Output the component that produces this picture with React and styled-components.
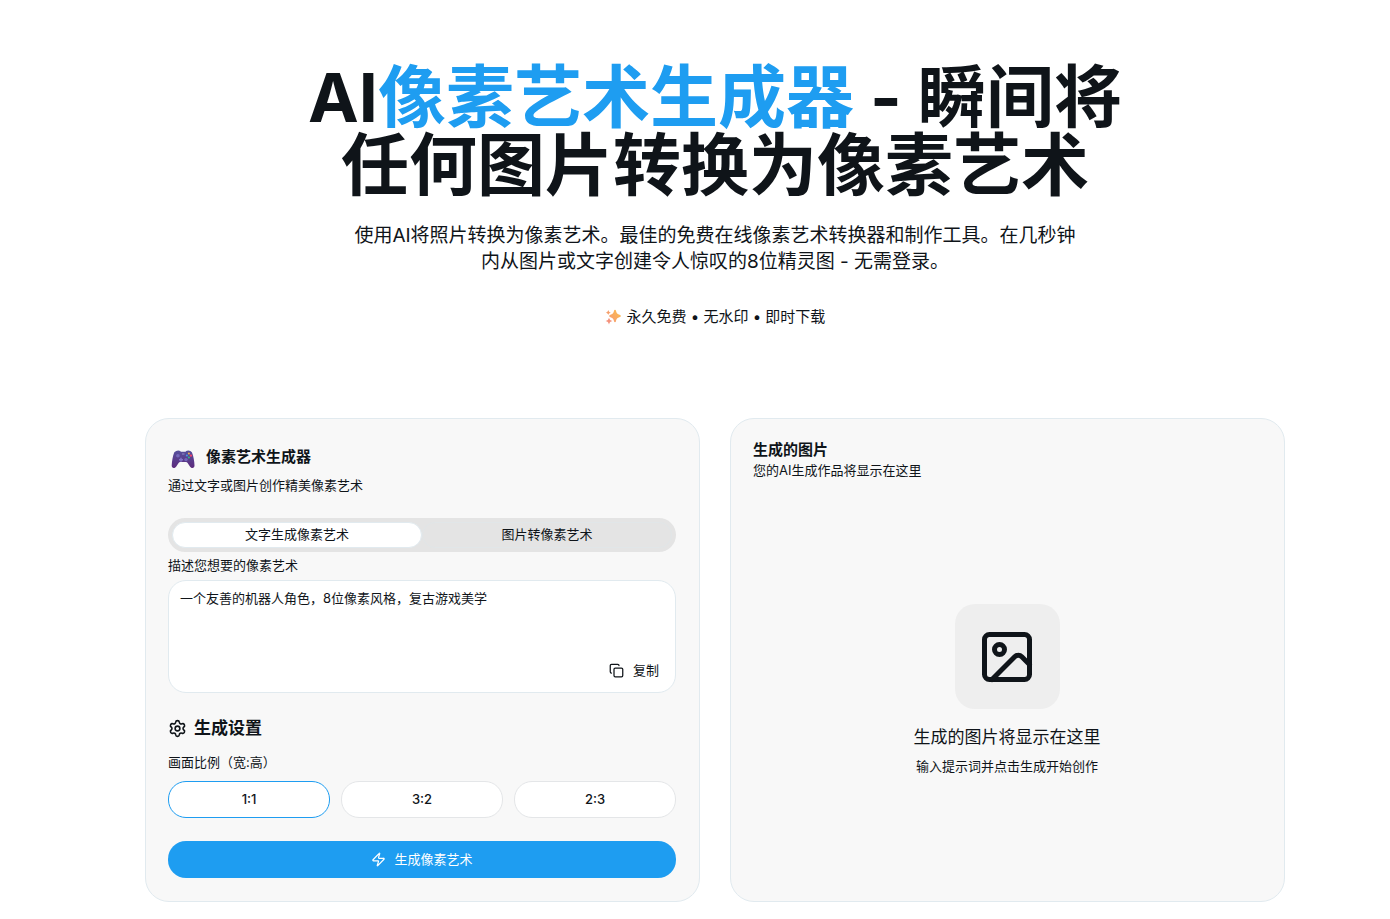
import React, { useState } from "react";
import styled, { createGlobalStyle, css } from "styled-components";
import { Copy, Settings, Zap, Image as ImageIcon } from "lucide-react";

const GlobalStyle = createGlobalStyle`
  *, *::before, *::after { box-sizing: border-box; }
  body {
    margin: 0;
    background: #ffffff;
    color: #0f1419;
    font-family: Inter, "Noto Sans CJK SC", sans-serif;
    font-size: 13px;
    line-height: 20px;
  }
  h1, h2, h3, p { margin: 0; }
  button, textarea { font: inherit; color: inherit; }
`;

const Page = styled.main`
  padding: 63px 105px 17px 145px;
`;

const Hero = styled.header`
  display: flex;
  flex-direction: column;
  align-items: center;
  text-align: center;
`;

const HeroTitle = styled.h1`
  max-width: 860px;
  font-size: 68px;
  line-height: 68px;
  font-weight: 700;
`;

const Phrase = styled.span`
  display: inline-block;
`;

const Accent = styled.span`
  color: #1e9df1;
`;

const Lead = styled.p`
  max-width: 730px;
  margin-top: 24px;
  font-size: 19px;
  line-height: 26px;
`;

const Perks = styled.p`
  display: flex;
  align-items: center;
  gap: 6px;
  margin-top: 31px;
  font-size: 15px;
  line-height: 22px;
`;

const Columns = styled.div`
  display: grid;
  grid-template-columns: 1fr 1fr;
  gap: 30px;
  margin-top: 90px;
`;

const Card = styled.section`
  display: flex;
  flex-direction: column;
  padding: 22px 23px 23px 22px;
  background: #f8f8f8;
  border: 1px solid #e1eaef;
  border-radius: 24px;
`;

const CardTitle = styled.h2`
  font-size: 15px;
  line-height: 18px;
  font-weight: 700;
`;

const CardNote = styled.p`
  margin-top: 1px;
`;

const TitleRow = styled.div`
  display: flex;
  align-items: center;
  gap: 8px;
  height: 32px;
  margin-bottom: 1px;
`;

const PadIcon = styled.svg`
  width: 30px;
  height: 30px;
  margin-top: 6px;
`;

const Tabs = styled.div`
  display: grid;
  grid-template-columns: 1fr 1fr;
  height: 34px;
  margin: 23px 0 3px;
  padding: 4px;
  background: #e4e4e4;
  border-radius: 17px;
`;

const Tab = styled.button`
  padding: 0 0 2px;
  border: 1px solid #e1e6e8;
  border-radius: 13px;
  background: transparent;
  line-height: 20px;
  ${(p) => p.$active && css`
    background: #ffffff;
    border-color: #e1eaef;
  `}
`;

const PromptBox = styled.div`
  position: relative;
  margin-top: 5px;
`;

const Prompt = styled.textarea`
  display: block;
  width: 100%;
  height: 113px;
  padding: 7px 11px;
  resize: none;
  outline: none;
  background: #ffffff;
  border: 1px solid #e1eaef;
  border-radius: 18px;
`;

const CopyButton = styled.button`
  position: absolute;
  right: 9px;
  bottom: 9px;
  display: flex;
  align-items: center;
  gap: 9px;
  padding: 4px 8px;
  border: 0;
  background: transparent;
`;

const SettingsTitle = styled.h3`
  display: flex;
  align-items: center;
  gap: 7px;
  margin: 23px 0 12px;
  font-size: 17px;
  line-height: 24px;
  font-weight: 700;
`;

const Ratios = styled.div`
  display: grid;
  grid-template-columns: repeat(3, 1fr);
  gap: 11px;
  margin: 9px 0 23px;
`;

const Ratio = styled.button`
  height: 37px;
  padding: 0 0 2px;
  font-weight: 500;
  background: #ffffff;
  border: 1px solid ${(p) => (p.$active ? "#1e9df1" : "#e4e6e8")};
  border-radius: 18px;
`;

const Generate = styled.button`
  display: flex;
  align-items: center;
  justify-content: center;
  gap: 8px;
  height: 37px;
  padding: 0 0 1px;
  color: #ffffff;
  background: #1e9df1;
  border: 0;
  border-radius: 18px;
`;

const Empty = styled.div`
  flex: 1;
  display: flex;
  flex-direction: column;
  align-items: center;
  justify-content: center;
  margin-top: 22px;
`;

const EmptyIcon = styled.div`
  display: flex;
  align-items: center;
  justify-content: center;
  width: 105px;
  height: 105px;
  margin-bottom: 15px;
  background: #eeeeee;
  border-radius: 20px;
`;

const EmptyTitle = styled.p`
  margin-bottom: 6px;
  font-size: 17px;
  line-height: 26px;
`;

function Sparkles() {
  return (
    <svg width="16" height="16" viewBox="0 0 16 16" aria-hidden="true">
      <defs>
        <linearGradient id="spark" x1="0" y1="1" x2="1" y2="0">
          <stop offset="0" stopColor="#f79a76" />
          <stop offset="1" stopColor="#fbc04c" />
        </linearGradient>
      </defs>
      <path fill="url(#spark)" d="M10 .8c.5 0 .8.4.9.8.6 2.700 1.300 3.600 4.200 4.400 1 .3 1 1.600 0 1.900-2.900.8-3.600 1.700-4.200 4.500-.2 1-1.600 1-1.800 0C8.500 9.600 7.700 8.700 4.900 7.900c-1-.3-1-1.600 0-1.900 2.800-.8 3.600-1.700 4.200-4.400.1-.4.400-.8.900-.8Z" />
      <path fill="#f6a06d" d="M3.300 1c.6 1.700.9 2 2.600 2.600-1.700.6-2 .9-2.600 2.500C2.700 4.500 2.400 4.200.8 3.600 2.400 3 2.700 2.700 3.300 1Z" />
      <path fill="#f4917b" d="M4 8.800c.8 2.200 1.200 2.600 3.400 3.300-2.200.7-2.600 1.100-3.400 3.300-.8-2.200-1.200-2.600-3.400-3.300C2.800 11.400 3.200 11 4 8.800Z" />
    </svg>
  );
}

function Gamepad() {
  return (
    <PadIcon viewBox="0 0 30 30" aria-hidden="true">
      <defs>
        <linearGradient id="pad" x1="0" y1="0" x2="0" y2="1">
          <stop offset="0" stopColor="#56509d" />
          <stop offset="1" stopColor="#5d2b7c" />
        </linearGradient>
      </defs>
      <path fill="url(#pad)" d="M8.200 6c.7-.7 3.200-.8 4 0l.6.700h4.800l.6-.7c.8-.8 3.400-.7 4.100 0 .5.500 1.400.8 1.800 1.700 1.300 3 2.300 8.600 2.400 12.900.1 2.700-2.700 3.400-4.400 1.100l-2.500-3.700c-.4-.6-.9-.9-1.700-.9h-5.600c-.8 0-1.300.3-1.700.9l-2.500 3.700c-1.700 2.300-4.500 1.600-4.400-1.100C3.900 16.300 4.800 10.700 6.100 7.700 6.600 6.800 7.700 6.500 8.200 6Z" />
      <circle cx="9.900" cy="10.700" r="1.800" fill="#7569bb" />
      <path d="M13 12.800v4M11 14.800h4" stroke="#8275c9" strokeWidth="1.500" />
      <circle cx="18" cy="14.600" r="1.700" fill="#7267b9" />
      <path d="M14 9h2.500" stroke="#8981c2" strokeWidth="1.200" />
      <circle cx="20.900" cy="8.600" r="1" fill="#efb34f" />
      <circle cx="18.900" cy="10.600" r="1" fill="#3d9be9" />
      <circle cx="22.900" cy="10.600" r="1.200" fill="#f0446c" />
      <circle cx="20.900" cy="12.600" r="1" fill="#32ba83" />
    </PadIcon>
  );
}

const MODES = ["文字生成像素艺术", "图片转像素艺术"];
const RATIOS = ["1:1", "3:2", "2:3"];

export default function App() {
  const [mode, setMode] = useState(0);
  const [ratio, setRatio] = useState("1:1");
  const [prompt, setPrompt] = useState("一个友善的机器人角色，8位像素风格，复古游戏美学");

  return (
    <>
      <GlobalStyle />
      <Page lang="zh-CN">
        <Hero>
          <HeroTitle>
            <Phrase>
              AI<Accent>像素艺术生成器</Accent> - 瞬间将
            </Phrase>
            <Phrase>任何图片转换为像素艺术</Phrase>
          </HeroTitle>
          <Lead>
            使用AI将照片转换为像素艺术。最佳的免费在线像素艺术转换器和制作工具。在几秒钟内从图片或文字创建令人惊叹的8位精灵图 - 无需登录。
          </Lead>
          <Perks>
            <Sparkles />
            <span>永久免费 • 无水印 • 即时下载</span>
          </Perks>
        </Hero>

        <Columns>
          <Card>
            <TitleRow>
              <Gamepad />
              <CardTitle>像素艺术生成器</CardTitle>
            </TitleRow>
            <CardNote>通过文字或图片创作精美像素艺术</CardNote>
            <Tabs role="tablist">
              {MODES.map((label, i) => (
                <Tab key={label} type="button" role="tab" aria-selected={mode === i} $active={mode === i} onClick={() => setMode(i)}>
                  {label}
                </Tab>
              ))}
            </Tabs>
            <label htmlFor="prompt">描述您想要的像素艺术</label>
            <PromptBox>
              <Prompt id="prompt" value={prompt} onChange={(e) => setPrompt(e.target.value)} />
              <CopyButton type="button" onClick={() => navigator.clipboard?.writeText(prompt)}>
                <Copy size={15} />
                复制
              </CopyButton>
            </PromptBox>
            <SettingsTitle>
              <Settings size={19} />
              生成设置
            </SettingsTitle>
            <p id="ratio-label">画面比例（宽:高）</p>
            <Ratios role="group" aria-labelledby="ratio-label">
              {RATIOS.map((r) => (
                <Ratio key={r} type="button" aria-pressed={ratio === r} $active={ratio === r} onClick={() => setRatio(r)}>
                  {r}
                </Ratio>
              ))}
            </Ratios>
            <Generate type="button">
              <Zap size={15} />
              生成像素艺术
            </Generate>
          </Card>

          <Card>
            <CardTitle>生成的图片</CardTitle>
            <CardNote>您的AI生成作品将显示在这里</CardNote>
            <Empty>
              <EmptyIcon>
                <ImageIcon size={60} />
              </EmptyIcon>
              <EmptyTitle>生成的图片将显示在这里</EmptyTitle>
              <p>输入提示词并点击生成开始创作</p>
            </Empty>
          </Card>
        </Columns>
      </Page>
    </>
  );
}
